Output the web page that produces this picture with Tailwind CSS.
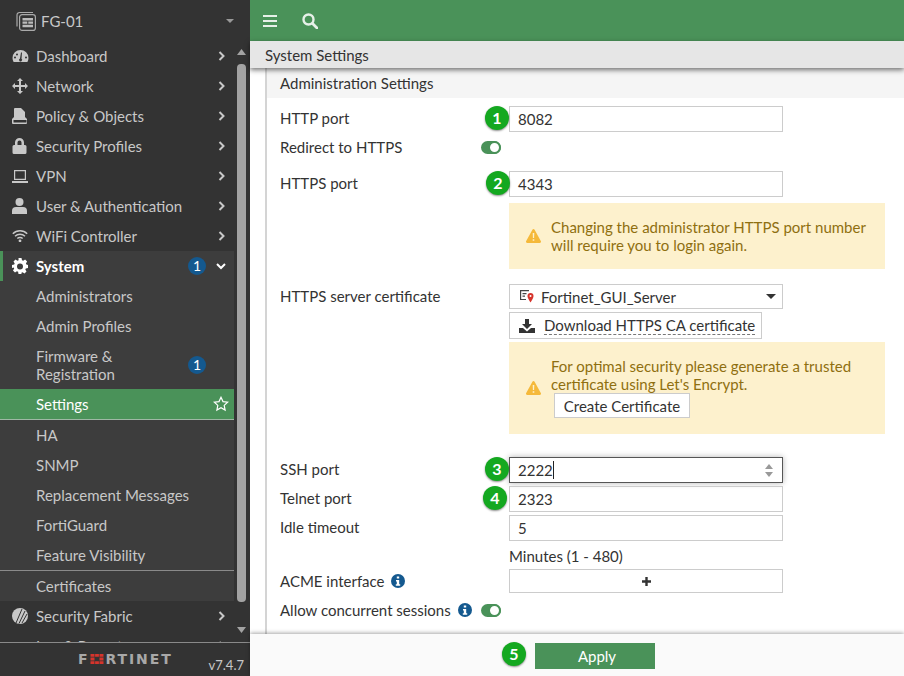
<!DOCTYPE html>
<html>
<head>
<meta charset="utf-8">
<script src="https://cdn.jsdelivr.net/npm/@tailwindcss/browser@4"></script>
</head>
<body class="m-0 overflow-hidden bg-white">
<div class="flex h-[676px] w-[904px] overflow-hidden font-['Lato','Liberation_Sans',sans-serif] text-[15px] leading-[18px] text-[#333]">
  <!-- Sidebar -->
  <aside class="relative flex h-full w-[250px] shrink-0 flex-col bg-[#333] text-[#c8c8c8]">
    <div class="flex h-[41px] shrink-0 items-center pl-[16px] pr-[16px]">
      <svg class="h-[20px] w-[20px] shrink-0" viewBox="0 0 20 20" fill="none"><path d="M1 15.500V4A2.500 2.500 0 0 1 3.500 1.500H17" stroke="#aaa" stroke-width="1.200"/><rect x="3.600" y="3.600" width="15.800" height="15.800" rx="2.500" stroke="#aaa" stroke-width="1.200"/><path d="M6.500 7h10.500v2.400H6.500zM6.500 10.400h4.800v2.400H6.500zM12.300 10.400h4.700v2.400h-4.700zM6.500 13.800h10.500v2.400H6.500z" fill="#bbb"/></svg>
      <span class="ml-[5px] text-[#c8c8c8]">FG-01</span>
      <svg class="ml-auto h-[4px] w-[8px]" viewBox="0 0 8 4"><path d="M0 0h8L4 4z" fill="#999"/></svg>
    </div>
    <nav class="h-[601px] overflow-hidden">
      <a class="flex h-[30px] w-[234px] items-center pl-[12px]"><span class="flex w-[24px] justify-start"><svg class="h-[16px] w-[17px]" viewBox="0 0 17 16"><path fill-rule="evenodd" d="M8.500 2a8 8 0 0 0-8 8c0 1.500.4 2.800 1.100 4h13.800c.7-1.200 1.100-2.500 1.100-4a8 8 0 0 0-8-8zM8 10.500l1-6h1l-.500 6.200a1.500 1.500 0 1 1-1.500-.2zM3 8.500a1 1 0 1 1 0 2 1 1 0 0 1 0-2zm2-3a1 1 0 1 1 0 2 1 1 0 0 1 0-2zm9 3a1 1 0 1 1 0 2 1 1 0 0 1 0-2z" fill="#c8c8c8"/></svg></span>Dashboard<svg class="ml-auto mr-[9px] h-[10px] w-[7px]" viewBox="0 0 7 10"><path d="M1.500 1l4 4-4 4" fill="none" stroke="#c8c8c8" stroke-width="2"/></svg></a>
      <a class="flex h-[30px] w-[234px] items-center pl-[12px]"><span class="flex w-[24px]"><svg class="h-[16px] w-[16px]" viewBox="0 0 16 16"><path d="M8 0l3 3H9v4h4V5l3 3-3 3V9H9v4h2l-3 3-3-3h2V9H3v2L0 8l3-3v2h4V3H5z" fill="#c8c8c8"/></svg></span>Network<svg class="ml-auto mr-[9px] h-[10px] w-[7px]" viewBox="0 0 7 10"><path d="M1.500 1l4 4-4 4" fill="none" stroke="#c8c8c8" stroke-width="2"/></svg></a>
      <a class="flex h-[30px] w-[234px] items-center pl-[12px]"><span class="flex w-[24px]"><svg class="h-[16px] w-[16px]" viewBox="0 0 16 16"><path d="M3 0h6l4 4v5l2 2v4a1 1 0 0 1-1 1H1a1 1 0 0 1-1-1v-4l2-2V1a1 1 0 0 1 1-1zM1.500 12v2.500h13V12z" fill="#c8c8c8" fill-rule="evenodd"/></svg></span>Policy &amp; Objects<svg class="ml-auto mr-[9px] h-[10px] w-[7px]" viewBox="0 0 7 10"><path d="M1.500 1l4 4-4 4" fill="none" stroke="#c8c8c8" stroke-width="2"/></svg></a>
      <a class="flex h-[30px] w-[234px] items-center pl-[12px]"><span class="flex w-[24px]"><svg class="h-[16px] w-[15px]" viewBox="0 0 15 16"><path d="M3 7V4.500a4.500 4.500 0 0 1 9 0V7h1a1.500 1.500 0 0 1 1.500 1.500v6A1.500 1.500 0 0 1 13 16H2a1.500 1.500 0 0 1-1.500-1.500v-6A1.500 1.500 0 0 1 2 7zm2.500 0h4V4.500a2 2 0 0 0-4 0z" fill="#c8c8c8"/></svg></span>Security Profiles<svg class="ml-auto mr-[9px] h-[10px] w-[7px]" viewBox="0 0 7 10"><path d="M1.500 1l4 4-4 4" fill="none" stroke="#c8c8c8" stroke-width="2"/></svg></a>
      <a class="flex h-[30px] w-[234px] items-center pl-[12px]"><span class="flex w-[24px]"><svg class="h-[13px] w-[16px]" viewBox="0 0 16 13"><path fill-rule="evenodd" d="M2 0h12v10H2zm1.200 1.200v7.600h9.600V1.200zM0 11h16v2H0z" fill="#c8c8c8"/></svg></span>VPN<svg class="ml-auto mr-[9px] h-[10px] w-[7px]" viewBox="0 0 7 10"><path d="M1.500 1l4 4-4 4" fill="none" stroke="#c8c8c8" stroke-width="2"/></svg></a>
      <a class="flex h-[30px] w-[234px] items-center pl-[12px]"><span class="flex w-[24px]"><svg class="h-[16px] w-[15px]" viewBox="0 0 15 16"><circle cx="7.500" cy="4" r="4" fill="#c8c8c8"/><path d="M0 16v-3a4 4 0 0 1 4-4h7a4 4 0 0 1 4 4v3z" fill="#c8c8c8"/></svg></span>User &amp; Authentication<svg class="ml-auto mr-[9px] h-[10px] w-[7px]" viewBox="0 0 7 10"><path d="M1.500 1l4 4-4 4" fill="none" stroke="#c8c8c8" stroke-width="2"/></svg></a>
      <a class="flex h-[30px] w-[234px] items-center pl-[12px]"><span class="flex w-[24px]"><svg class="h-[12px] w-[16px]" viewBox="0 0 16 12" fill="none" stroke="#c8c8c8" stroke-width="1.400"><path d="M.8 3.800a10 10 0 0 1 14.400 0M3 6.300a7 7 0 0 1 10 0M5.300 8.600a3.800 3.800 0 0 1 5.400 0"/><circle cx="8" cy="10.800" r=".7" fill="#c8c8c8"/></svg></span>WiFi Controller<svg class="ml-auto mr-[9px] h-[10px] w-[7px]" viewBox="0 0 7 10"><path d="M1.500 1l4 4-4 4" fill="none" stroke="#c8c8c8" stroke-width="2"/></svg></a>
      <div class="w-[234px] bg-[#3d3d3d]">
        <a class="flex h-[30px] items-center border-l-[3px] border-[#4a9259] pl-[9px] font-bold text-white"><span class="flex w-[24px]"><svg class="h-[16px] w-[16px]" viewBox="0 0 16 16"><path fill-rule="evenodd" d="M6.500 0h3l.5 2.200 1.200.5L13.100 1.500l2 2-1.200 1.900.5 1.200L16 7v3l-2.200.4-.5 1.200 1.200 1.900-2 2-1.900-1.200-1.200.5L9.500 16h-3l-.4-2.200-1.200-.5-1.900 1.200-2-2 1.200-1.900-.5-1.200L0 10V7l2.200-.4.500-1.200L1.500 3.500l2-2 1.900 1.200 1.200-.5zM8 5.500a3 3 0 1 0 0 6 3 3 0 0 0 0-6z" fill="#fff"/></svg></span>System<span class="ml-auto flex h-[18px] w-[18px] items-center justify-center rounded-full bg-[#14598f] text-[14px] font-normal">1</span><svg class="ml-[10px] mr-[8px] h-[7px] w-[10px]" viewBox="0 0 10 7"><path d="M1 1l4 4 4-4" fill="none" stroke="#fff" stroke-width="2"/></svg></a>
        <a class="flex h-[30px] items-center pl-[36px]">Administrators</a>
        <a class="flex h-[30px] items-center pl-[36px]">Admin Profiles</a>
        <a class="flex h-[48px] items-center pl-[36px] pr-[28px]"><span class="w-[130px]">Firmware &amp; Registration</span><span class="ml-auto flex h-[18px] w-[18px] items-center justify-center rounded-full bg-[#14598f] text-[14px] text-white">1</span></a>
        <a class="flex h-[31px] items-center border-b border-[#9fb8a5] bg-[#4a9259] pl-[36px] text-white">Settings<svg class="ml-auto mr-[5px] h-[16px] w-[16px]" viewBox="0 0 16 16"><path d="M8 1.300l2 4.300 4.700.6-3.500 3.200.9 4.700L8 11.800 3.900 14.100l.9-4.700L1.300 6.200l4.700-.6z" fill="none" stroke="#fff" stroke-width="1.200"/></svg></a>
        <a class="flex h-[30px] items-center pl-[36px]">HA</a>
        <a class="flex h-[30px] items-center pl-[36px]">SNMP</a>
        <a class="flex h-[30px] items-center pl-[36px]">Replacement Messages</a>
        <a class="flex h-[30px] items-center pl-[36px]">FortiGuard</a>
        <a class="flex h-[31px] items-center border-b border-[#8a8a8a] pl-[36px]">Feature Visibility</a>
        <a class="flex h-[30px] items-center pl-[36px]">Certificates</a>
      </div>
      <a class="flex h-[30px] w-[234px] items-center pl-[12px]"><span class="flex w-[24px]"><svg class="h-[16px] w-[16px]" viewBox="0 0 16 16"><circle cx="8" cy="8" r="8" fill="#c8c8c8"/><path d="M4 15L10 1M7 15.500L13 3M10 15l5-9" stroke="#333" stroke-width="1"/></svg></span>Security Fabric<svg class="ml-auto mr-[9px] h-[10px] w-[7px]" viewBox="0 0 7 10"><path d="M1.500 1l4 4-4 4" fill="none" stroke="#c8c8c8" stroke-width="2"/></svg></a>
      <a class="flex h-[30px] w-[234px] items-center pl-[12px]"><span class="w-[24px]"></span>Log &amp; Report<svg class="ml-auto mr-[9px] h-[10px] w-[7px]" viewBox="0 0 7 10"><path d="M1.500 1l4 4-4 4" fill="none" stroke="#c8c8c8" stroke-width="2"/></svg></a>
    </nav>
    <div class="flex h-[34px] shrink-0 border-t border-[#8a8a8a] pl-[78px] pr-[6px]">
      <span class="mt-[7px] flex h-[18px] items-center font-['DejaVu_Sans',sans-serif] text-[14px] font-bold tracking-[1.900px] text-[#a8a8a8]">F<svg class="mx-[1px] h-[10px] w-[14px]" viewBox="0 0 13 10"><path d="M0 0h4v2.800H0zM4.600 0h3.800v2.800H4.600zM9 0h4v2.800H9zM0 7.200h4V10H0zM4.600 7.200h3.800V10H4.600zM9 7.200h4V10H9zM0 3.400h4v3.200H0zM9 3.400h4v3.200H9z" fill="#d6342c"/></svg>RTINET</span>
      <span class="ml-auto mt-[13px] text-[13px]">v7.4.7</span>
    </div>
    <!-- overlay scrollbar -->
    <svg class="absolute left-[237px] top-[49px] h-[6px] w-[9px]" viewBox="0 0 9 6"><path d="M0 6h9L4.500 0z" fill="#a3a3a3"/></svg>
    <div class="absolute left-[237px] top-[64px] h-[538px] w-[9px] rounded-[4px] bg-[#a3a3a3]"></div>
    <svg class="absolute left-[237px] top-[627px] h-[6px] w-[9px]" viewBox="0 0 9 6"><path d="M0 0h9L4.500 6z" fill="#a3a3a3"/></svg>
  </aside>

  <!-- Main -->
  <main class="relative flex h-full min-w-0 flex-1 flex-col">
    <header class="flex h-[41px] shrink-0 items-center bg-[#4a9259] pl-[13px]">
      <svg class="h-[14px] w-[14px]" viewBox="0 0 14 14"><path d="M0 1h14v2H0zM0 6h14v2H0zM0 11h14v2H0z" fill="#e6f0e8"/></svg>
      <svg class="ml-[25px] h-[16px] w-[16px]" viewBox="0 0 16 16"><circle cx="6.500" cy="6.500" r="5" fill="none" stroke="#e6f0e8" stroke-width="2.400"/><path d="M10.500 10.500L15 15" stroke="#e6f0e8" stroke-width="2.800" stroke-linecap="round"/></svg>
    </header>
    <div class="relative z-10 flex h-[27px] shrink-0 items-center bg-[#e6e6e6] pl-[15px] shadow-[0_2px_5px_rgba(0,0,0,0.55)]">System Settings</div>

    <div class="ml-[15px] min-h-0 flex-1 overflow-hidden border-l-2 border-[#d4d4d4]">
      <div class="flex h-[30px] items-center bg-[#f5f5f5] pl-[13px]">Administration Settings</div>
      <div class="pl-[13px] pr-[19px]">
        <div class="mt-[8px] flex h-[26px] items-start">
          <label class="w-[229px] shrink-0 pt-[3px]">HTTP port</label>
          <div class="relative w-[274px]">
            <div class="flex h-[26px] items-center border border-[#ccc] pl-[8px]">8082</div>
            <span class="absolute left-[-24px] top-[0px] flex h-[24px] w-[24px] items-center justify-center rounded-full bg-[#14a820] text-[16px] font-bold text-white shadow-[0_1px_2px_rgba(0,0,0,0.45)]">1</span>
          </div>
        </div>
        <div class="mt-[5px] flex h-[20px] items-center">
          <label class="w-[201px] shrink-0">Redirect to HTTPS</label>
          <span class="flex h-[13px] w-[20px] items-center justify-end rounded-full bg-[#4a9259]"><span class="h-[13px] w-[13px] rounded-full border-2 border-[#4a9259] bg-white"></span></span>
        </div>
        <div class="mt-[14px] flex h-[26px] items-start">
          <label class="w-[229px] shrink-0 pt-[3px]">HTTPS port</label>
          <div class="relative w-[274px]">
            <div class="flex h-[26px] items-center border border-[#ccc] pl-[8px]">4343</div>
            <span class="absolute left-[-23px] top-[0px] flex h-[24px] w-[24px] items-center justify-center rounded-full bg-[#14a820] text-[16px] font-bold text-white shadow-[0_1px_2px_rgba(0,0,0,0.45)]">2</span>
          </div>
        </div>
        <div class="ml-[229px] mt-[6px] flex h-[66px] w-[376px] items-center bg-[#fdf1cd] pl-[17px] text-[#8f6f10]">
          <svg class="h-[14px] w-[15px] shrink-0" viewBox="0 0 15 14"><path d="M7.500 0a1.300 1.300 0 0 1 1.100.7l6.200 11.300a1.300 1.300 0 0 1-1.100 2H1.300A1.300 1.300 0 0 1 .2 12L6.400.7A1.300 1.300 0 0 1 7.500 0z" fill="#f5b93a"/><path d="M6.700 4h1.600l-.2 5H6.900zM6.700 10.200h1.600v1.600H6.700z" fill="#fdf1cd"/></svg>
          <p class="ml-[10px]">Changing the administrator HTTPS port number will require you to login again.</p>
        </div>
        <div class="mt-[15px] flex items-start">
          <label class="w-[229px] shrink-0 pt-[3px]">HTTPS server certificate</label>
          <div class="w-[274px]">
            <div class="flex h-[25px] items-center border border-[#ccc] pl-[10px] pr-[6px]">
              <svg class="h-[13px] w-[14px] shrink-0" viewBox="0 0 14 13"><path fill-rule="evenodd" d="M0 0h9v1.200H0zM0 1.200h1.200V9H0zM0 9h6v1H0zM2.500 3h4v1.200h-4zM2.500 5.500h2.500v1.200H2.500z" fill="#444"/><path d="M10.500 3a3 3 0 0 1 3 3c0 2.200-3 6.500-3 6.500S7.500 8.200 7.500 6a3 3 0 0 1 3-3z" fill="#d6342c"/><circle cx="10.500" cy="6" r="1" fill="#fff"/></svg>
              <span class="ml-[7px]">Fortinet_GUI_Server</span>
              <svg class="ml-auto h-[5px] w-[10px]" viewBox="0 0 10 5"><path d="M0 0h10L5 5z" fill="#333"/></svg>
            </div>
            <button class="mt-[3px] flex h-[27px] w-[253px] items-center border border-[#ccc] pl-[9px]">
              <svg class="h-[14px] w-[16px] shrink-0" viewBox="0 0 16 14"><path d="M6 0h4v5h3L8 10 3 5h3z" fill="#333"/><path d="M0 9h4l4 3.500L12 9h4v5H0z" fill="#333"/></svg>
              <span class="ml-[9px] border-b border-dashed border-[#777] leading-[17px]">Download HTTPS CA certificate</span>
            </button>
          </div>
        </div>
        <div class="ml-[229px] mt-[3px] flex h-[92px] w-[376px] items-start bg-[#fdf1cd] pl-[17px] pt-[15px] text-[#8f6f10]">
          <svg class="mt-[24px] h-[14px] w-[15px] shrink-0" viewBox="0 0 15 14"><path d="M7.500 0a1.300 1.300 0 0 1 1.100.7l6.200 11.300a1.300 1.300 0 0 1-1.100 2H1.300A1.300 1.300 0 0 1 .2 12L6.400.7A1.300 1.300 0 0 1 7.500 0z" fill="#f5b93a"/><path d="M6.700 4h1.600l-.2 5H6.900zM6.700 10.200h1.600v1.600H6.700z" fill="#fdf1cd"/></svg>
          <div class="ml-[10px]">
            <p>For optimal security please generate a trusted certificate using Let's Encrypt.</p>
            <button class="ml-[3px] mt-[0px] flex h-[25px] w-[136px] items-center justify-center border border-[#ccc] bg-white text-[#333]">Create Certificate</button>
          </div>
        </div>
        <div class="mt-[23px] flex h-[26px] items-start">
          <label class="w-[229px] shrink-0 pt-[3px]">SSH port</label>
          <div class="relative w-[274px]">
            <div class="flex h-[26px] items-center border border-[#555] pl-[8px] pr-[9px] shadow-[0_0_6px_rgba(0,0,0,0.3)]">
              <span>2222</span><span class="h-[18px] w-px bg-[#222]"></span>
              <span class="ml-auto flex flex-col gap-[3px]"><svg class="block h-[5px] w-[8px]" viewBox="0 0 8 5"><path d="M0 5h8L4 0z" fill="#999"/></svg><svg class="block h-[5px] w-[8px]" viewBox="0 0 8 5"><path d="M0 0h8L4 5z" fill="#999"/></svg></span>
            </div>
            <span class="absolute left-[-24px] top-[0px] flex h-[24px] w-[24px] items-center justify-center rounded-full bg-[#14a820] text-[16px] font-bold text-white shadow-[0_1px_2px_rgba(0,0,0,0.45)]">3</span>
          </div>
        </div>
        <div class="mt-[3px] flex h-[26px] items-start">
          <label class="w-[229px] shrink-0 pt-[3px]">Telnet port</label>
          <div class="relative w-[274px]">
            <div class="flex h-[26px] items-center border border-[#ccc] pl-[8px]">2323</div>
            <span class="absolute left-[-26px] top-[0px] flex h-[24px] w-[24px] items-center justify-center rounded-full bg-[#14a820] text-[16px] font-bold text-white shadow-[0_1px_2px_rgba(0,0,0,0.45)]">4</span>
          </div>
        </div>
        <div class="mt-[3px] flex h-[26px] items-start">
          <label class="w-[229px] shrink-0 pt-[3px]">Idle timeout</label>
          <div class="flex h-[26px] w-[274px] items-center border border-[#ccc] pl-[8px]">5</div>
        </div>
        <div class="ml-[229px] mt-[6px] h-[20px]">Minutes (1 - 480)</div>
        <div class="mt-[2px] flex h-[24px] items-center">
          <label class="flex w-[229px] shrink-0 items-center">ACME interface<svg class="ml-[6px] h-[14px] w-[14px]" viewBox="0 0 14 14"><circle cx="7" cy="7" r="7" fill="#14598f"/><path d="M5.800 2.500h2.400v2H5.800zM5 6h3.200v4.200h1v1.500H4.800v-1.500h1V7.500H5z" fill="#fff"/></svg></label>
          <div class="flex h-[24px] w-[274px] items-center justify-center border border-[#ccc]"><svg class="h-[9px] w-[9px]" viewBox="0 0 9 9"><path d="M3.300 0h2.400v3.300H9v2.400H5.700V9H3.300V5.700H0V3.300h3.300z" fill="#333"/></svg></div>
        </div>
        <div class="mt-[7px] flex h-[20px] items-center">
          <label class="flex shrink-0 items-center">Allow concurrent sessions<svg class="ml-[7px] h-[14px] w-[14px]" viewBox="0 0 14 14"><circle cx="7" cy="7" r="7" fill="#14598f"/><path d="M5.800 2.500h2.400v2H5.800zM5 6h3.200v4.200h1v1.500H4.800v-1.500h1V7.500H5z" fill="#fff"/></svg></label>
          <span class="ml-[9px] flex h-[13px] w-[20px] items-center justify-end rounded-full bg-[#4a9259]"><span class="h-[13px] w-[13px] rounded-full border-2 border-[#4a9259] bg-white"></span></span>
        </div>
      </div>
    </div>

    <footer class="relative h-[42px] shrink-0 bg-[#fafafa] pl-[285px] pt-[9px] shadow-[0_-1px_4px_rgba(0,0,0,0.35)]">
      <button class="relative block h-[26px] w-[120px] bg-[#4a9259] pl-[4px] text-white">Apply
        <span class="absolute left-[-33px] top-[-1px] flex h-[24px] w-[24px] items-center justify-center rounded-full bg-[#14a820] text-[16px] font-bold text-white shadow-[0_1px_2px_rgba(0,0,0,0.45)]">5</span>
      </button>
    </footer>
  </main>
</div>
</body>
</html>
